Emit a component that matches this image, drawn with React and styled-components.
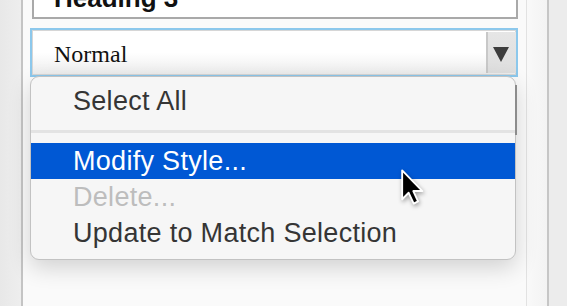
import React from 'react';
import styled, { createGlobalStyle } from 'styled-components';

const GlobalStyle = createGlobalStyle`
  html, body {
    margin: 0;
    padding: 0;
    overflow: hidden;
    background: #ececec;
  }
`;

const Page = styled.div`
  position: relative;
  display: flex;
  width: 567px;
  height: 306px;
  overflow: hidden;
`;

const LeftGutter = styled.div`
  width: 21px;
  flex-shrink: 0;
  background: linear-gradient(to right, #e8e8e8, #eeeeee);
  border-right: 2px solid #c4c4c4;
`;

const Panel = styled.div`
  flex: 1;
  display: flex;
  flex-direction: column;
  padding: 0 8px 0 7px;
  background: #fafafa;
`;

const RightRail = styled.div`
  display: flex;
  flex-shrink: 0;
  border-left: 1px solid #e2e2e2;

  .inner {
    width: 20px;
    background: linear-gradient(to right, #f9f9f9, #f3f3f3);
    border-right: 2px solid #c6c6c6;
  }
  .outer {
    width: 18px;
    background: #ececec;
  }
`;

const HeadingBox = styled.div`
  display: flex;
  align-items: flex-end;
  height: 40px;
  margin: -21px 0 0 2px;
  padding: 0 0 6px 20px;
  box-sizing: border-box;
  border: 2px solid #a9a9a9;
  background: #fff;
  font-family: 'Liberation Sans', Arial, sans-serif;
  font-weight: bold;
  font-size: 26px;
  line-height: 26px;
  color: #111;
`;

const SelectWrap = styled.div`
  position: relative;
  margin-top: 9px;
`;

const SelectBox = styled.div`
  display: flex;
  height: 49px;
  box-sizing: border-box;
  border: 2px solid #8cc8ec;
  box-shadow: inset 0 0 0 1px #d6d6d6;
  background: linear-gradient(#ffffff 50%, #ececec);
`;

const SelectValue = styled.div`
  flex: 1;
  display: flex;
  align-items: center;
  padding: 3px 0 0 22px;
  font-family: 'Liberation Serif', 'Times New Roman', serif;
  font-size: 24px;
  color: #111;
`;

const SelectButton = styled.div`
  width: 30px;
  margin: 2px 0;
  display: flex;
  justify-content: center;
  padding-top: 15px;
  box-sizing: border-box;
  border-left: 2px solid #c8c8c8;
  background: linear-gradient(#e6e6e6, #dedede);
`;

const Triangle = styled.div`
  width: 0;
  height: 0;
  margin-right: 2px;
  border-left: 8px solid transparent;
  border-right: 8px solid transparent;
  border-top: 15px solid #3d3d3d;
`;

const Menu = styled.div`
  position: absolute;
  top: 48px;
  left: 0;
  width: 486px;
  box-sizing: border-box;
  padding: 6px 0 8px;
  background: #f6f6f6;
  border: 1px solid #c2c2c2;
  border-radius: 9px;
  box-shadow: 0 8px 22px rgba(0, 0, 0, 0.16);
  font-family: 'Liberation Sans', Arial, sans-serif;

  &::after {
    content: '';
    position: absolute;
    right: -2px;
    top: 8px;
    width: 2px;
    height: 50px;
    background: #8c8c8c;
  }
`;

const MenuItem = styled.div`
  height: 36px;
  display: flex;
  align-items: center;
  padding-left: 42px;
  font-size: 27px;
  letter-spacing: 0.3px;
  color: ${(p) => (p.$active ? '#fff' : p.$disabled ? '#bdbdbd' : '#353535')};
  background: ${(p) => (p.$active ? '#0058d4' : 'transparent')};
`;

const Separator = styled.div`
  height: 3px;
  margin: 11px 0 10px;
  background: #e3e3e3;
`;

const Cursor = styled.svg`
  position: absolute;
  left: 400px;
  top: 168px;
  filter: drop-shadow(1px 2px 2px rgba(0, 0, 0, 0.35));
`;

const items = [
  { label: 'Modify Style...', active: true },
  { label: 'Delete...', disabled: true },
  { label: 'Update to Match Selection' },
];

export default function App() {
  return (
    <>
      <GlobalStyle />
      <Page>
        <LeftGutter />
        <Panel>
          <HeadingBox>Heading 3</HeadingBox>
          <SelectWrap>
            <SelectBox>
              <SelectValue>Normal</SelectValue>
              <SelectButton>
                <Triangle />
              </SelectButton>
            </SelectBox>
            <Menu>
              <MenuItem>Select All</MenuItem>
              <Separator />
              {items.map((it) => (
                <MenuItem key={it.label} $active={it.active} $disabled={it.disabled}>
                  {it.label}
                </MenuItem>
              ))}
            </Menu>
          </SelectWrap>
        </Panel>
        <RightRail>
          <div className='inner' />
          <div className='outer' />
        </RightRail>
        <Cursor width='26' height='38' viewBox='0 0 18 26'>
          <path
            d='M1.5 1.5 L1.5 21.5 L6 17 L9.5 24.5 L12.5 23 L9.2 15.8 L15.5 15.8 Z'
            fill='#000'
            stroke='#fff'
            strokeWidth='1.3'
            strokeLinejoin='round'
          />
        </Cursor>
      </Page>
    </>
  );
}
